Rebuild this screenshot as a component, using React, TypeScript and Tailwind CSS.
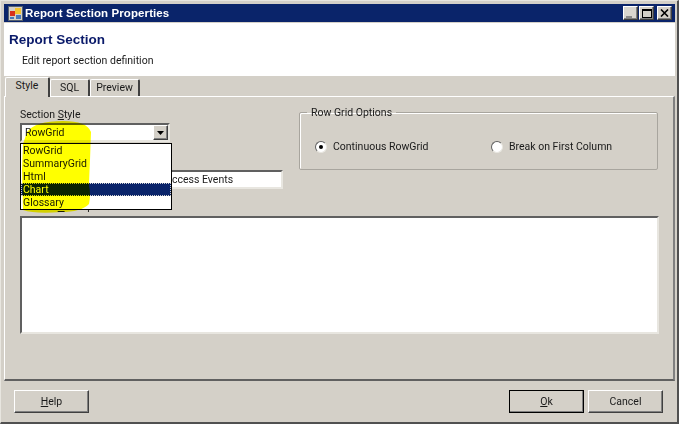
import type { ReactNode } from "react";

const raised =
  "border border-t-white border-l-white border-r-[#404040] border-b-[#404040] bg-[#d4d0c8] shadow-[inset_-1px_-1px_0_#808080]";
const sunken =
  "border-2 border-t-[#606060] border-l-[#606060] border-r-[#e8e6e0] border-b-[#e8e6e0] bg-white";

function CaptionButton({ children, className = "" }: { children: ReactNode; className?: string }) {
  return (
    <div className={`w-[15px] h-[14px] flex items-center justify-center ${raised} ${className}`}>
      {children}
    </div>
  );
}

function Tab({ label, width, active }: { label: string; width: string; active?: boolean }) {
  return (
    <div
      className={`flex items-center justify-center border-l border-t border-white border-r-2 border-r-[#404040] rounded-t-[2px] ${width} ${
        active ? "h-[20px] pb-[4px] -mb-px z-10 bg-[#d4d0c8]" : "h-[17px] pb-[2px]"
      }`}
    >
      {label}
    </div>
  );
}

function Radio({ checked, label, width }: { checked?: boolean; label: string; width: string }) {
  return (
    <div className={`flex items-center gap-[6px] shrink-0 ${width}`}>
      <span className="w-[12px] h-[12px] shrink-0 rounded-full bg-white border border-t-[#606060] border-l-[#606060] border-r-[#e8e6e0] border-b-[#e8e6e0] flex items-center justify-center">
        {checked && <span className="w-[4px] h-[4px] rounded-full bg-black" />}
      </span>
      <span className="whitespace-nowrap">{label}</span>
    </div>
  );
}

const options = ["RowGrid", "SummaryGrid", "Html", "Chart", "Glossary"];

export default function App() {
  return (
    <div className="relative w-[679px] h-[424px] overflow-hidden bg-[#d4d0c8] text-[10.5px] leading-[13px] text-[#1a1a1a] font-['Roboto',sans-serif] border-t border-t-[#e8e6e0] border-b-2 border-b-[#505050] border-r-2 border-r-[#505050] border-l border-l-[#e8e6e0] flex flex-col pl-[3px] pr-[2px] pt-[3px]">
      {/* title bar */}
      <div className="h-[18px] shrink-0 bg-[#0a246a] flex items-center pl-[4px] pr-[3px] text-white font-bold text-[11.5px] font-['Liberation_Sans',sans-serif]">
        <svg width="15" height="15" viewBox="0 0 15 15" className="mr-[2px] shrink-0">
          <rect x="0.5" y="0.5" width="14" height="14" fill="#d4d0c8" stroke="#55606e" />
          <rect x="2" y="5" width="5" height="5" fill="#d8301c" />
          <rect x="7" y="2" width="6" height="6" fill="#f4c430" />
          <rect x="8" y="9" width="5" height="4" fill="#4a78b8" />
          <rect x="2" y="11" width="4" height="2" fill="#4a78b8" />
        </svg>
        <span className="flex-1 tracking-[0.1px]">Report Section Properties</span>
        <div className="flex items-center text-black">
          <CaptionButton className="bg-[#d9d6cf]">
            <span className="w-[6px] h-[2px] bg-[#8a8a8a] mt-[8px] -ml-[3px]" />
          </CaptionButton>
          <CaptionButton className="ml-px">
            <span className="w-[10px] h-[9px] border border-black border-t-2" />
          </CaptionButton>
          <CaptionButton className="ml-[3px]">
            <svg width="9" height="8" viewBox="0 0 9 8">
              <path d="M1 0.5 L8 7.5 M8 0.5 L1 7.5" stroke="#000" strokeWidth="1.6" />
            </svg>
          </CaptionButton>
        </div>
      </div>

      {/* header */}
      <div className="h-[53px] shrink-0 bg-white mt-px pl-[5px] pt-[9px]">
        <div className="text-[13.5px] leading-[16px] font-bold text-[#0a1a6a] font-['Liberation_Sans',sans-serif]">Report Section</div>
        <div className="pl-[13px] mt-[6px]">Edit report section definition</div>
      </div>

      {/* tabs */}
      <div className="h-[20px] shrink-0 flex items-end pl-[1px]">
        <Tab label="Style" width="w-[45px]" active />
        <Tab label="SQL" width="w-[40px]" />
        <Tab label="Preview" width="w-[50px]" />
      </div>

      {/* tab page */}
      <div className="h-[285px] shrink-0 border-t border-l border-t-white border-l-white border-r-2 border-r-[#808080] border-b-2 border-b-[#606060] px-[15px] pt-[11px]">
        <div className="flex h-[108px]">
          <div className="w-[263px] shrink-0">
            <div className="h-[13px] mb-[2px]">
              Section <span className="underline">S</span>tyle
            </div>
            <div className={`w-[150px] h-[19px] flex items-center justify-between pl-[3px] ${sunken}`}>
              <span>RowGrid</span>
              <div className={`w-[15px] h-[15px] flex items-center justify-center ${raised}`}>
                <svg width="7" height="4" viewBox="0 0 7 4">
                  <path d="M0 0 H7 L3.5 4 Z" fill="#000" />
                </svg>
              </div>
            </div>
            <div className={`w-[263px] h-[19px] mt-[28px] flex items-center pl-[150px] whitespace-nowrap ${sunken}`}>
              <span>ccess Events</span>
            </div>
            <div className="h-[13px] mt-[11px]">
              Section <span className="underline">D</span>escription
            </div>
          </div>
          <fieldset className="ml-[16px] w-[359px] h-[64px] border border-[#a8a59e] shadow-[inset_1px_1px_0_#fff] rounded-[2px] pl-[15px] -mt-[2px]">
            <legend className="px-[4px] -ml-[8px]">Row Grid Options</legend>
            <div className="flex items-center mt-[21px]">
              <Radio checked label="Continuous RowGrid" width="w-[176px]" />
              <Radio label="Break on First Column" width="w-[150px]" />
            </div>
          </fieldset>
        </div>
        <div className={`w-[639px] h-[118px] ${sunken}`} />
      </div>

      {/* footer buttons */}
      <div className="flex-1 flex items-start justify-between pl-[10px] pr-[12px] pt-[9px]">
        <button className={`w-[75px] h-[23px] ${raised}`}>
          <span className="underline">H</span>elp
        </button>
        <div className="flex gap-[4px]">
          <button className="w-[75px] h-[23px] outline outline-1 -outline-offset-1 outline-black shadow-[inset_-2px_-2px_0_#808080,inset_1px_1px_0_#fff] bg-[#d4d0c8]">
            <span className="underline">O</span>k
          </button>
          <button className={`w-[75px] h-[23px] ${raised}`}>Cancel</button>
        </div>
      </div>

      {/* open combo list */}
      <div className="absolute left-[19px] top-[142px] w-[152px] h-[67px] bg-white border border-black">
        {options.map((o) => (
          <div
            key={o}
            className={`h-[13px] pl-[2px] ${
              o === "Chart" ? "bg-[#0a246a] text-white outline-1 outline-dotted -outline-offset-1 outline-[#d0d0d0]" : ""
            }`}
          >
            {o}
          </div>
        ))}
      </div>

      {/* yellow highlighter stroke over the screenshot */}
      <svg
        width="80"
        height="100"
        viewBox="0 0 80 100"
        className="absolute left-[20px] top-[119px] mix-blend-multiply pointer-events-none"
      >
        <path
          d="M6 12 Q14 1 42 1 Q66 1 70 12 L69 40 Q68 62 68 66 Q70 74 68 84 Q60 92 40 92 Q14 94 2 90 L1 50 L2 24 Z"
          fill="#ffff00"
        />
      </svg>
    </div>
  );
}
